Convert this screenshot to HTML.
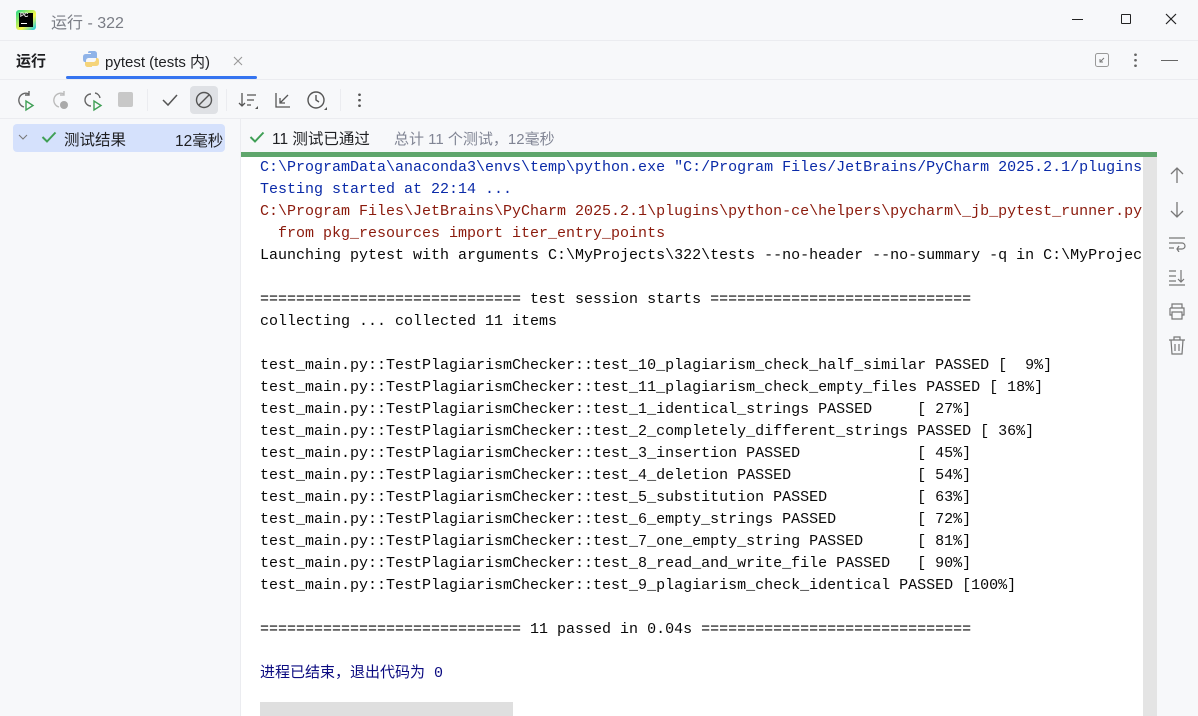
<!DOCTYPE html>
<html><head><meta charset="utf-8"><style>
*{margin:0;padding:0;box-sizing:border-box}
body{width:1198px;height:716px;overflow:hidden;background:#f7f8fa;font-family:"Liberation Sans","Noto Sans CJK SC",sans-serif;position:relative;color:#000}
.abs{position:absolute}
.con{position:absolute;left:241px;top:157px;width:902px;height:559px;background:#fff;overflow:hidden}
.con pre{font-family:"Liberation Mono","DejaVu Sans Mono","Noto Sans CJK SC",monospace;font-size:15px;line-height:22px;position:absolute;left:19px;top:0;white-space:pre;color:#080808}
.b{color:#0a2aa8}.r{color:#8b1a0c}.n{color:#0a0a80}
svg{position:absolute}
</style></head><body>
<div class="abs" style="left:16px;top:10px;width:20px;height:20px;background:linear-gradient(135deg,#21d789,#fcf84a 60%,#07c3f2);border-radius:3px"></div>
<div class="abs" style="left:19px;top:13px;width:14px;height:14px;background:#000"></div>
<div class="abs" style="left:20px;top:13px;font-size:6px;color:#fff;font-weight:bold">PC</div>
<div class="abs" style="left:21px;top:23px;width:6px;height:1px;background:#fff"></div>
<div class="abs" style="left:51px;top:9px;font-size:16px;color:#7a7d85">运行 - 322</div>
<div class="abs" style="left:1072px;top:19px;width:11px;height:1px;background:#222"></div>
<div class="abs" style="left:1121px;top:14px;width:10px;height:10px;border:1px solid #222;border-radius:1px"></div>
<svg style="left:1165px;top:13px" width="12" height="12"><path d="M1 1L11 11M11 1L1 11" stroke="#222" stroke-width="1.2"/></svg>
<div class="abs" style="left:0;top:40px;width:1198px;height:1px;background:#ebecf0"></div>
<div class="abs" style="left:16px;top:50px;font-size:15px;font-weight:bold;color:#1e1f22">运行</div>
<svg style="left:82px;top:50px" width="18" height="18"><path d="M8 1h4c2 0 3 1 3 3v4H7c-2 0-3 1-3 3v1H3c-2 0-2-2-2-4s0-4 3-4h5V3H6C6 1 7 1 8 1z" fill="#8fb3e8"/><path d="M10 17H6c-2 0-3-1-3-3v-2h8c2 0 3-1 3-3V8h1c2 0 2 2 2 4s0 4-3 4h-4v1z" fill="#f5d47a"/></svg>
<div class="abs" style="left:105px;top:51px;font-size:15px;color:#1e1f22">pytest (tests 内)</div>
<svg style="left:233px;top:56px" width="10" height="10"><path d="M1 1L9 9M9 1L1 9" stroke="#999" stroke-width="1.1"/></svg>
<div class="abs" style="left:66px;top:76px;width:191px;height:3px;background:#3574f0;border-radius:2px"></div>
<svg style="left:1094px;top:52px" width="16" height="16"><rect x="1.5" y="1.5" width="13" height="13" rx="2" fill="none" stroke="#999"/><path d="M10 6L6 10M6 7v3h3" stroke="#777" fill="none"/></svg>
<div class="abs" style="left:1134px;top:52px;width:3px;height:16px;background:radial-gradient(circle,#666 1.2px,transparent 1.5px) 0 0/3px 5.5px"></div>
<div class="abs" style="left:1161px;top:60px;width:17px;height:1px;background:#666"></div>
<div class="abs" style="left:0;top:79px;width:1198px;height:1px;background:#ebecf0"></div>
<svg style="left:15px;top:90px" width="22" height="22"><path d="M14 4A7 7 0 1 0 9 17" stroke="#666" stroke-width="1.4" fill="none"/><path d="M14 1v4h-4" stroke="#666" stroke-width="1.4" fill="none"/><path d="M11 11v9l7-4.5z" stroke="#3f9f55" stroke-width="1.4" fill="none"/></svg>
<svg style="left:50px;top:90px" width="22" height="22"><path d="M14 4A7 7 0 1 0 9 17" stroke="#bbb" stroke-width="1.4" fill="none"/><path d="M14 1v4h-4" stroke="#bbb" stroke-width="1.4" fill="none"/><circle cx="14" cy="15" r="4" fill="#aaa"/></svg>
<svg style="left:83px;top:90px" width="22" height="22"><path d="M8 4A6 6 0 0 0 8 16M12 3A6 6 0 0 1 17 8" stroke="#666" stroke-width="1.4" fill="none"/><path d="M11 11v9l7-4.5z" stroke="#3f9f55" stroke-width="1.4" fill="none"/></svg>
<div class="abs" style="left:118px;top:92px;width:15px;height:15px;background:#c8c8c8;border-radius:2px"></div>
<div class="abs" style="left:147px;top:89px;width:1px;height:22px;background:#ebecf0"></div>
<svg style="left:161px;top:92px" width="18" height="16"><path d="M2 8l5 5 9-10" stroke="#555" stroke-width="1.5" fill="none"/></svg>
<div class="abs" style="left:190px;top:86px;width:28px;height:28px;background:#dfe1e5;border-radius:4px"></div>
<svg style="left:195px;top:91px" width="18" height="18"><circle cx="9" cy="9" r="7.5" stroke="#555" stroke-width="1.4" fill="none"/><path d="M14 4L4 14" stroke="#555" stroke-width="1.4"/></svg>
<div class="abs" style="left:226px;top:89px;width:1px;height:22px;background:#ebecf0"></div>
<svg style="left:238px;top:90px" width="22" height="22"><path d="M4 3v13M1 13l3 3 3-3M9 5h9M9 10h7M9 15h4" stroke="#555" stroke-width="1.3" fill="none"/><path d="M17 19l3-3v3z" fill="#555"/></svg>
<svg style="left:272px;top:90px" width="22" height="22"><path d="M4 3v14h14M8 13l8-8M8 8v5h5" stroke="#555" stroke-width="1.3" fill="none"/></svg>
<svg style="left:305px;top:89px" width="24" height="24"><circle cx="11" cy="11" r="8" stroke="#555" stroke-width="1.4" fill="none"/><path d="M11 6v5l3 2" stroke="#555" stroke-width="1.4" fill="none"/><path d="M19 21l3-3v3z" fill="#555"/></svg>
<div class="abs" style="left:340px;top:89px;width:1px;height:22px;background:#ebecf0"></div>
<div class="abs" style="left:358px;top:92px;width:3px;height:16px;background:radial-gradient(circle,#555 1.2px,transparent 1.5px) 0 0/3px 5.5px"></div>
<div class="abs" style="left:0;top:118px;width:1198px;height:1px;background:#ebecf0"></div>
<div class="abs" style="left:13px;top:124px;width:212px;height:28px;background:#d5e1fc;border-radius:4px"></div>
<svg style="left:18px;top:134px" width="10" height="8"><path d="M1 1l4 4 4-4" stroke="#777" fill="none"/></svg>
<svg style="left:41px;top:130px" width="16" height="14"><path d="M1.5 7l4.5 4.5 8.5-9" stroke="#3f9f55" stroke-width="2" fill="none"/></svg>
<div class="abs" style="left:64px;top:128px;font-size:15.5px;color:#1e1f22">测试结果</div>
<div class="abs" style="left:175px;top:129px;font-size:15.5px;color:#1e1f22">12毫秒</div>
<div class="abs" style="left:240px;top:119px;width:1px;height:597px;background:#ebecf0"></div>
<svg style="left:249px;top:130px" width="16" height="14"><path d="M1.5 7l4.5 4.5 8.5-9" stroke="#3f9f55" stroke-width="2" fill="none"/></svg>
<div class="abs" style="left:272px;top:127px;font-size:15.5px;color:#1e1f22">11 测试已通过</div>
<div class="abs" style="left:394px;top:128px;font-size:15px;color:#818594">总计 11 个测试，12毫秒</div>
<div class="abs" style="left:241px;top:152px;width:916px;height:5px;background:#5fa66c"></div>
<div class="con"><pre><span class="b">C:\ProgramData\anaconda3\envs\temp\python.exe "C:/Program Files/JetBrains/PyCharm 2025.2.1/plugins/p</span>
<span class="b">Testing started at 22:14 ...</span>
<span class="r">C:\Program Files\JetBrains\PyCharm 2025.2.1\plugins\python-ce\helpers\pycharm\_jb_pytest_runner.py:1</span>
<span class="r">  from pkg_resources import iter_entry_points</span>
Launching pytest with arguments C:\MyProjects\322\tests --no-header --no-summary -q in C:\MyProjects

============================= test session starts =============================
collecting ... collected 11 items

test_main.py::TestPlagiarismChecker::test_10_plagiarism_check_half_similar PASSED [  9%]
test_main.py::TestPlagiarismChecker::test_11_plagiarism_check_empty_files PASSED [ 18%]
test_main.py::TestPlagiarismChecker::test_1_identical_strings PASSED     [ 27%]
test_main.py::TestPlagiarismChecker::test_2_completely_different_strings PASSED [ 36%]
test_main.py::TestPlagiarismChecker::test_3_insertion PASSED             [ 45%]
test_main.py::TestPlagiarismChecker::test_4_deletion PASSED              [ 54%]
test_main.py::TestPlagiarismChecker::test_5_substitution PASSED          [ 63%]
test_main.py::TestPlagiarismChecker::test_6_empty_strings PASSED         [ 72%]
test_main.py::TestPlagiarismChecker::test_7_one_empty_string PASSED      [ 81%]
test_main.py::TestPlagiarismChecker::test_8_read_and_write_file PASSED   [ 90%]
test_main.py::TestPlagiarismChecker::test_9_plagiarism_check_identical PASSED [100%]

============================= 11 passed in 0.04s ==============================

<span class="n">进程已结束，退出代码为 0</span></pre>
<div class="abs" style="left:19px;top:545px;width:253px;height:14px;background:#dfdfdf"></div>
</div>
<div class="abs" style="left:1143px;top:157px;width:14px;height:559px;background:#e4e4e4"></div>
<svg style="left:1169px;top:166px" width="16" height="18"><path d="M8 17V2M2 8l6-6 6 6" stroke="#777" stroke-width="1.3" fill="none"/></svg>
<svg style="left:1169px;top:201px" width="16" height="18"><path d="M8 1v15M2 10l6 6 6-6" stroke="#777" stroke-width="1.3" fill="none"/></svg>
<svg style="left:1168px;top:236px" width="18" height="16"><path d="M1 2h16M1 7h13a3 3 0 0 1 0 6H9M1 12h5M11 10l-2 3 2 3" stroke="#777" stroke-width="1.2" fill="none"/></svg>
<svg style="left:1168px;top:268px" width="18" height="18"><path d="M1 3h7M1 8h7M1 13h7M13 2v12M10 11l3 3 3-3M1 17h16" stroke="#777" stroke-width="1.2" fill="none"/></svg>
<svg style="left:1168px;top:302px" width="18" height="18"><path d="M4 6V2h10v4M2 6h14v7h-2M4 13H2V6M4 10h10v7H4z" stroke="#777" stroke-width="1.2" fill="none"/></svg>
<svg style="left:1168px;top:336px" width="18" height="19"><path d="M1 4h16M6 4V1h6v3M3 4l1 14h10l1-14M7 8v7M11 8v7" stroke="#777" stroke-width="1.2" fill="none"/></svg>
</body></html>
